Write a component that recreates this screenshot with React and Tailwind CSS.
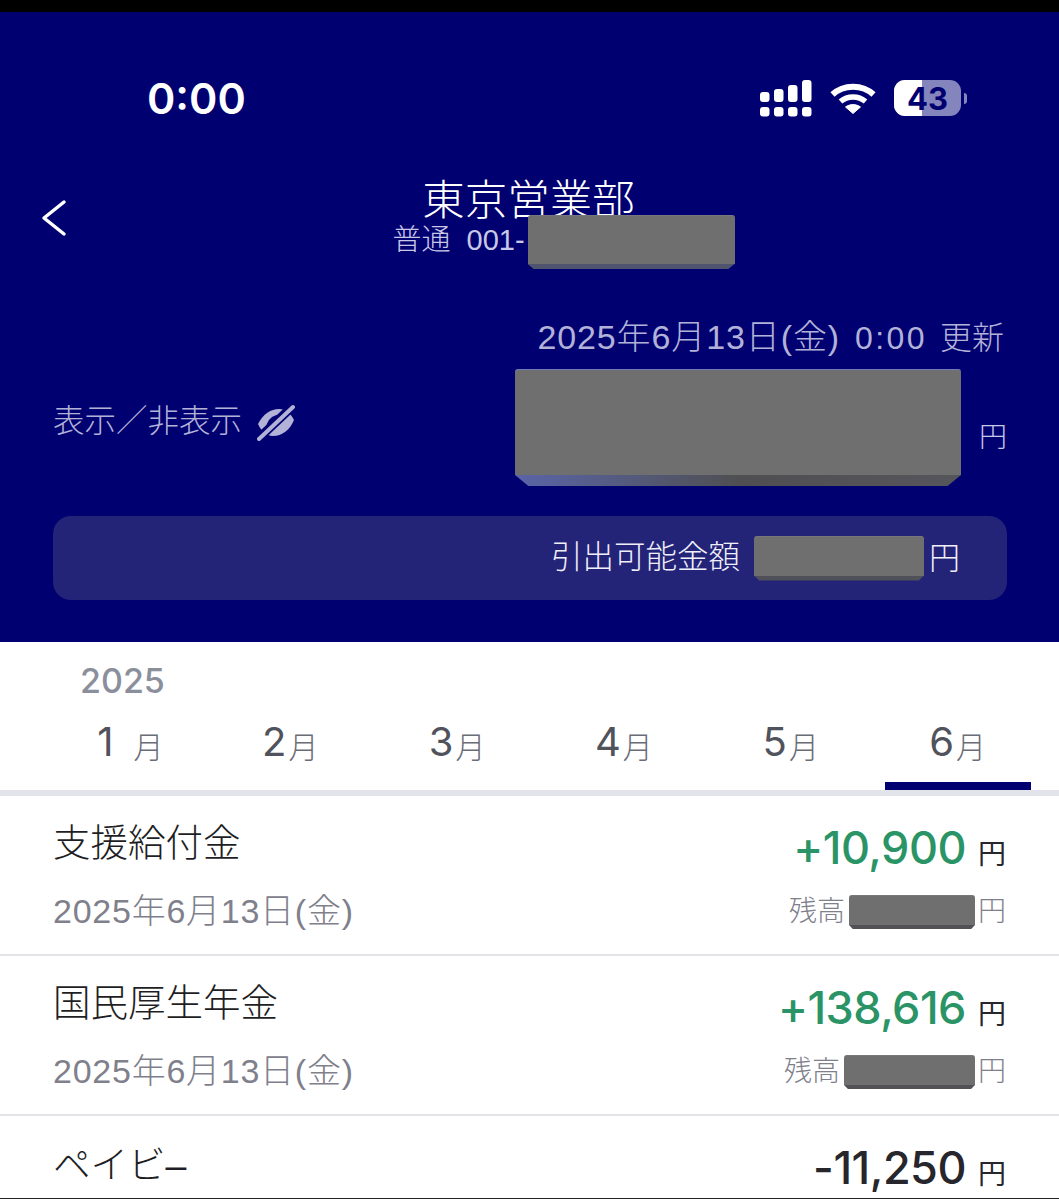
import React from "react";

function Redact({ className = "", bevel = "h-[4px] bg-[#525256]", top = "border-t-[#77777c]" }) {
  return (
    <div className={"flex shrink-0 flex-col " + className}>
      <div className={"min-h-0 flex-1 rounded-t-[3px] border-t bg-[#6f6f70] " + top} />
      <div className={"[clip-path:polygon(0_0,100%_0,97%_100%,3%_100%)] " + bevel} />
    </div>
  );
}

function Signal() {
  const cols = [
    [760, 91],
    [774, 88],
    [788, 84],
    [802, 79],
  ];
  return (
    <svg width="54" height="38" viewBox="759 78 54 38" fill="#fff">
      {cols.map(([x, y]) => (
        <g key={x}>
          <rect x={x} y={y} width="9.5" height={101 - y} rx="3" />
          <rect x={x} y="106" width="9.5" height="9.5" rx="3" />
        </g>
      ))}
    </svg>
  );
}

function Wifi() {
  return (
    <svg width="46" height="34" viewBox="0 0 46 34" fill="none" stroke="#fff" strokeLinecap="butt">
      <path d="M2.5 13.5C13.5 3 32.5 3 43.5 13.5" strokeWidth="6" />
      <path d="M10.5 20.5C17.5 14.5 28.5 14.5 35.5 20.5" strokeWidth="5.5" />
      <path d="M23 32.5L15.5 26C20 22.8 26 22.8 30.5 26Z" fill="#fff" stroke="#fff" strokeWidth="1" strokeLinejoin="round" />
    </svg>
  );
}

function Battery() {
  return (
    <div className="flex items-center gap-[3px]">
      <div className="relative flex h-[36px] w-[67px] items-center justify-center overflow-hidden rounded-[11px] bg-[#8585bd]">
        <div className="absolute inset-y-0 left-0 w-[28px] bg-white" />
        <span className="relative font-['Inter'] text-[31px] leading-none font-bold text-[#000070]">43</span>
      </div>
      <div className="h-[11px] w-[3px] rounded-r-full bg-[#8585bd]" />
    </div>
  );
}

function EyeOff() {
  return (
    <svg width="38" height="37" viewBox="0 0 38 37">
      <path d="M1 20C6 10 14 5 22 5C29 5 34 10 37 16C33 26 25 32 16 32C9 32 4 27 1 20Z" fill="#b2b2d8" />
      <path d="M11 21C13 15 18 12 23 12" fill="none" stroke="#000070" strokeWidth="3" />
      <path d="M1 35L36 2" stroke="#000070" strokeWidth="9" />
      <path d="M2 35L36 3" stroke="#b2b2d8" strokeWidth="4" strokeLinecap="round" />
    </svg>
  );
}

function Row({ title, date, amount, positive, balanceW, last }) {
  return (
    <div className={(last ? "h-[83px] overflow-hidden border-b border-[#222]" : "h-[160px] border-b-[2px] border-[#e4e4e8]") + " shrink-0 bg-white pt-[24px] pr-[53px] pl-[54px]"}>
      <div className="flex h-[48px] items-center justify-between">
        <span className={"-ml-[1px] text-[37.5px] leading-none font-light text-[#1e1e24] " + (last ? "mt-[4px]" : "")}>{title}</span>
        <div className="flex items-baseline pt-[6px]">
          <span className={"font-['Inter'] text-[45px] leading-none font-medium tracking-[-0.5px] " + (positive ? "text-[#2b9467]" : "text-[#26262c]")}>{amount}</span>
          <span className="ml-[12px] text-[28px] leading-none text-[#26262c]">円</span>
        </div>
      </div>
      {!last && (
        <div className="mt-[20px] flex h-[48px] items-center justify-between">
          <span className="-mt-[2px] -ml-[1px] text-[34px] leading-none font-light tracking-[0.75px] text-[#80808c]">{date}</span>
          <div className="flex items-center text-[28px] leading-none font-light text-[#80808c]">
            <span>残高</span>
            <Redact className={"ml-[4px] h-[34px] " + balanceW} />
            <span className="ml-[3px]">円</span>
          </div>
        </div>
      )}
    </div>
  );
}

const months = ["1", "2", "3", "4", "5", "6"];

export default function App() {
  return (
    <div className="h-[1199px] w-[1059px] overflow-hidden bg-white font-['Liberation_Sans','Noto_Sans_CJK_JP',sans-serif]">
      <div className="h-[12px] bg-black" />
      <header className="h-[630px] bg-[#000070]">
        <div className="flex h-[150px] items-start pt-[59px] pr-[92px] pl-[147px]">
          <span className="font-['Inter'] text-[43px] leading-[54px] font-semibold text-white">0:00</span>
          <div className="ml-auto flex items-center pt-[8px]">
            <Signal />
            <div className="mr-[18px] ml-[17px]"><Wifi /></div>
            <Battery />
          </div>
        </div>
        <div className="relative h-[153px]">
          <svg className="absolute top-[37px] left-[40px]" width="28" height="38" viewBox="0 0 28 38" fill="none" stroke="#fff" strokeWidth="3.5" strokeLinecap="round" strokeLinejoin="round">
            <path d="M24 3L4 19L24 35" />
          </svg>
          <div className="flex flex-col items-center pt-[15px]">
            <div className="h-[41px] pr-[2px] text-[42.5px] leading-[48px] font-light text-white">東京営業部</div>
            <div className="relative flex h-[44px] w-[272px] items-center self-center text-[29px] leading-none font-light text-[#c8c8e6]">
              <span className="-ml-[1px]">普通</span>
              <span className="ml-[16px]">001-</span>
              <Redact className="absolute top-[-3px] left-[134px] h-[54px] w-[207px]" bevel="h-[5px] bg-[#50546e]" />
            </div>
          </div>
        </div>
        <div className="pr-[55px] text-right text-[32px] leading-[44px] font-light text-[#b2b2d8]">
          <span className="text-[34px] tracking-[0.9px]">2025年6月13日(金)</span>
          <span className="ml-[15px] tracking-[2.4px]">0:00</span>
          <span className="ml-[13px]">更新</span>
        </div>
        <div className="flex items-center pt-[9px] pr-[52px] pl-[53px]">
          <span className="-mt-[11px] text-[31.5px] leading-none font-light text-[#b2b2d8]">表示／非表示</span>
          <div className="-mt-[11px] ml-[15px]"><EyeOff /></div>
          <Redact
            className="ml-auto h-[117px] w-[446px]"
            bevel="h-[11px] bg-gradient-to-r from-[#5a64a8] via-[#4f4f52] to-[#55555c]"
            top="border-t-[#6f7ab8]"
          />
          <span className="mt-[20px] ml-[18px] text-[28px] leading-none font-light text-[#c8c8e6]">円</span>
        </div>
        <div className="mx-[53px] mt-[30px] flex h-[84px] w-[954px] items-center justify-end rounded-[18px] bg-[#232378] pr-[47px]">
          <span className="text-[31.5px] leading-none font-light text-[#f0f0fa]">引出可能金額</span>
          <Redact className="ml-[14px] h-[45px] w-[170px]" bevel="h-[5px] bg-[#50505a]" />
          <span className="ml-[5px] text-[31px] leading-none font-light text-[#f0f0fa]">円</span>
        </div>
      </header>

      <section className="h-[154px] border-b-[6px] border-[#e3e3ec] bg-white">
        <div className="pt-[20px] pl-[80px] font-['Inter'] text-[34px] leading-[38px] font-medium text-[#8b8f9c]">2025</div>
        <div className="mt-[12px] grid h-[78px] grid-cols-6 pr-[18px] pl-[40px]">
          {months.map((m, i) => (
            <div key={m} className={"relative flex items-start justify-center pt-[4px] " + (i === 0 ? "pl-[14px]" : "")}>
              <span className="font-['Inter'] text-[40px] leading-[52px] text-[#50525c]">{m}</span>
              <span className={"mt-[14px] text-[30px] leading-[36px] font-light text-[#6a6c76] " + (i === 0 ? "ml-[20px]" : "ml-[2px]")}>月</span>
              {i === 5 && <div className="absolute bottom-0 left-[11px] h-[8px] w-[146px] bg-[#000070]" />}
            </div>
          ))}
        </div>
      </section>

      <Row title="支援給付金" date="2025年6月13日(金)" amount="+10,900" positive balanceW="w-[126px]" />
      <Row title="国民厚生年金" date="2025年6月13日(金)" amount="+138,616" positive balanceW="w-[131px]" />
      <Row title="ペイビ–" amount="-11,250" last />
    </div>
  );
}
